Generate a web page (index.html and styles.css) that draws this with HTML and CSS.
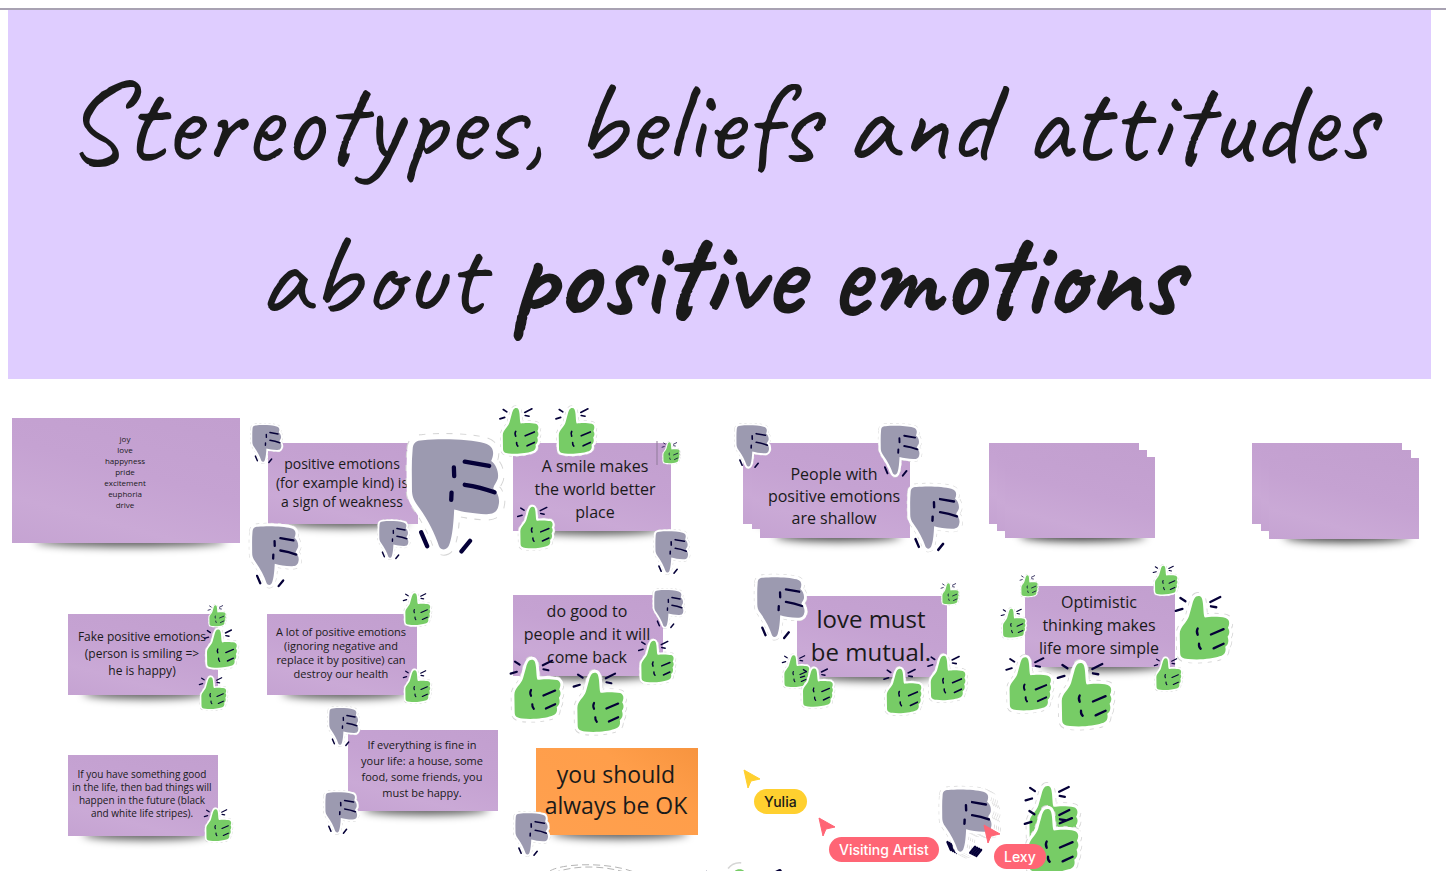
FILE: index.html
```html
<!DOCTYPE html>
<html lang="en">
<head>
<meta charset="utf-8">
<meta name="viewport" content="width=device-width, initial-scale=1">
<title>Stereotypes, beliefs and attitudes</title>
<link rel="stylesheet" href="styles.css">
</head>
<body>
<main class="board">
  <header class="frame">
    <h1 class="title">Stereotypes, beliefs and attitudes<br>about <strong>positive emotions</strong></h1>
  </header>

  <p class="note note-words">joy<br>love<br>happyness<br>pride<br>excitement<br>euphoria<br>drive</p>
  <p class="note note-weakness">positive emotions<br>(for example kind) is<br>a sign of weakness</p>
  <p class="note note-smile">A smile makes<br>the world better<br>place</p>

  <div class="note shallow-back"></div>
  <div class="note shallow-mid"></div>
  <p class="note note-shallow">People with<br>positive emotions<br>are shallow</p>

  <div class="note spare-a-back"></div>
  <div class="note spare-a-mid"></div>
  <div class="note spare-a-front"></div>
  <div class="note spare-b-back"></div>
  <div class="note spare-b-mid"></div>
  <div class="note spare-b-front"></div>

  <p class="note note-fake">Fake positive emotions<br>(person is smiling =&gt;<br>he is happy)</p>
  <p class="note note-health">A lot of positive emotions<br>(ignoring negative and<br>replace it by positive) can<br>destroy our health</p>
  <p class="note note-good">do good to<br>people and it will<br>come back</p>
  <p class="note note-mutual">love must<br>be mutual.</p>
  <p class="note note-optimistic">Optimistic<br>thinking makes<br>life more simple</p>
  <p class="note note-stripes">If you have something good<br>in the life, then bad things will<br>happen in the future (black<br>and white life stripes).</p>
  <p class="note note-fine">If everything is fine in<br>your life: a house, some<br>food, some friends, you<br>must be happy.</p>
  <p class="note note-orange">you should<br>always be OK</p>

  <svg class="stickers" aria-hidden="true">
    <defs>
      <path id="up-body" d="M76 12C66 12 62 22 58 36L48 72C42 92 20 104 20 126L21 182C21 196 28 200 45 202C80 206 120 201 140 194C158 190 160 176 157 165C168 158 168 145 164 135C172 125 170 115 165 108C172 95 170 82 158 78C140 74 110 74 96 77C92 74 92 60 90 36C88 20 86 12 76 12Z"/>
      <path id="down-body" d="M14 50C15 28 24 22 45 21C100 15 190 18 232 30C262 38 262 62 252 84C268 95 276 120 272 138C268 150 262 154 258 167C272 178 280 200 274 220C270 240 255 246 235 245C200 244 165 238 140 231C138 270 135 310 126 335C120 356 101 356 94 342C80 300 60 262 30 220C15 200 12 185 12 170C12 130 10 90 14 50Z"/>
      <symbol id="up" viewBox="0 0 180 220">
        <use href="#up-body" class="cut"/>
        <use href="#up-body" class="edge edge-up"/>
        <use href="#up-body" class="green"/>
        <path class="ink ink-up" d="M74 110Q69 118 74 129M78 156Q77 166 83 171M114 128L152 112M122 170L152 156M22 18L37 28M8 57L28 51M112 30L142 15M114 43L130 46"/>
      </symbol>
      <symbol id="down" viewBox="0 0 300 380">
        <use href="#down-body" class="cut cut-down"/>
        <use href="#down-body" class="edge edge-down"/>
        <use href="#down-body" class="grey"/>
        <path class="ink ink-down" d="M139 103L140 130M132 180L131 202M172 86L246 99M172 156Q220 163 262 179M40 300L58 342M188 326L162 358"/>
      </symbol>
    </defs>

    <use href="#up" x="498" y="405" width="43" height="53"/>
    <use href="#up" x="554" y="405" width="43" height="53"/>
    <path class="hairline" d="M657 441V465"/>
    <use href="#up" x="661" y="441" width="20" height="24"/>
    <use href="#up" x="516" y="504" width="39" height="48"/>
    <use href="#up" x="207" y="604" width="20" height="24"/>
    <use href="#up" x="203" y="627" width="36" height="44"/>
    <use href="#up" x="198" y="675" width="30" height="37"/>
    <use href="#up" x="402" y="591" width="30" height="37"/>
    <use href="#up" x="402" y="668" width="30" height="37"/>
    <use href="#up" x="203" y="807" width="30" height="37"/>
    <use href="#up" x="508" y="656" width="56" height="68"/>
    <use href="#up" x="571" y="669" width="56" height="68"/>
    <use href="#up" x="637" y="638" width="39" height="48"/>
    <use href="#up" x="940" y="582" width="20" height="24"/>
    <use href="#up" x="781" y="653" width="30" height="37"/>
    <use href="#up" x="799" y="666" width="36" height="44"/>
    <use href="#up" x="882" y="666" width="42" height="51"/>
    <use href="#up" x="926" y="653" width="42" height="51"/>
    <use href="#up" x="1019" y="574" width="20" height="24"/>
    <use href="#up" x="1152" y="564" width="27" height="33"/>
    <use href="#up" x="1000" y="607" width="27" height="33"/>
    <use href="#up" x="1173" y="592" width="60" height="73"/>
    <use href="#up" x="1153" y="656" width="30" height="37"/>
    <use href="#up" x="1004" y="654" width="50" height="61"/>
    <use href="#up" x="1055" y="659" width="60" height="73"/>
    <use href="#up" x="1023" y="782" width="58" height="71"/>
    <use href="#up" x="1022" y="805" width="60" height="73"/>
    <use href="#up" x="693" y="862" width="110" height="134"/>

    <use href="#down" x="251" y="423" width="33" height="42"/>
    <use href="#down" x="250" y="523" width="53" height="67"/>
    <use href="#down" x="378" y="519" width="33" height="42"/>
    <use href="#down" x="408" y="433" width="99" height="126"/>
    <use href="#down" x="654" y="529" width="37" height="47"/>
    <use href="#down" x="735" y="423" width="37" height="47"/>
    <use href="#down" x="879" y="423" width="44" height="56"/>
    <use href="#down" x="908" y="483" width="56" height="71"/>
    <use href="#down" x="328" y="706" width="33" height="42"/>
    <use href="#down" x="324" y="790" width="36" height="46"/>
    <use href="#down" x="653" y="588" width="33" height="42"/>
    <use href="#down" x="755" y="574" width="54" height="68"/>
    <use href="#down" x="514" y="811" width="37" height="47"/>
    <use href="#down" x="946" y="789" width="56" height="71"/>
    <use href="#down" x="944" y="788" width="56" height="71"/>
    <use href="#down" x="942" y="787" width="56" height="71"/>
    <use href="#down" x="940" y="786" width="56" height="71"/>
    <path class="arc" d="M550 871C560 864 605 861 634 872M553 873C575 865 602 865 628 873"/>
  </svg>

  <div class="cursor cursor-yulia">
    <svg class="pointer" viewBox="0 0 18 20" aria-hidden="true"><path d="M1 1L17 10L8 12L5 19Z"/></svg>
    <span class="name">Yulia</span>
  </div>
  <div class="cursor cursor-artist">
    <svg class="pointer" viewBox="0 0 18 20" aria-hidden="true"><path d="M1 1L17 10L8 12L5 19Z"/></svg>
    <span class="name">Visiting Artist</span>
  </div>
  <div class="cursor cursor-lexy">
    <svg class="pointer" viewBox="0 0 18 20" aria-hidden="true"><path d="M1 1L17 10L8 12L5 19Z"/></svg>
    <span class="name">Lexy</span>
  </div>
</main>
</body>
</html>
```

FILE: styles.css
```css
* { box-sizing: border-box; }

body {
  margin: 0;
  background: #fff;
  color: #1a1a1a;
  font-family: "Open Sans", "Noto Sans", sans-serif;
}

.board {
  position: relative;
  min-height: 100vh;
  padding-top: 8px;
  overflow: hidden;
}

/* Title frame */
.frame {
  border-top: 2px solid #a8a2b2;
  padding: 0 15px 0 8px;
}

.title {
  margin: 0;
  padding: 36px 0 27px;
  background: #dfcdff;
  font-family: Caveat, Lato, sans-serif;
  font-size: 117px;
  font-weight: 400;
  line-height: 153px;
  text-align: center;
}

.title strong { font-weight: 700; }

/* Sticky notes, placed freely on the canvas */
.note {
  position: absolute;
  isolation: isolate;
  display: flex;
  align-items: center;
  justify-content: center;
  width: 150px;
  height: 81px;
  margin: 0;
  padding: 0 2px 3px 0;
  text-align: center;
  white-space: nowrap;
  font-size: 16px;
  line-height: 23px;
}

.note::before {
  content: "";
  position: absolute;
  z-index: -2;
  left: 10%;
  right: 6%;
  bottom: -4px;
  height: 12px;
  border-radius: 50%;
  background: rgba(0, 0, 0, 0.65);
  filter: blur(4px);
}

.note::after {
  content: "";
  position: absolute;
  z-index: -1;
  inset: 0;
  background: linear-gradient(195deg, #c29fcf 0%, #c5a2d2 45%, #caa9d6 75%, #c5a3d2 100%);
}

.note-words {
  left: 12px; top: 418px; width: 228px; height: 125px;
  align-items: flex-start;
  padding-top: 15px;
  font-size: 8px;
  line-height: 11px;
}
.note-weakness { left: 268px; top: 443px; font-size: 14px; line-height: 19px; }
.note-smile { left: 513px; top: 443px; width: 158px; height: 88px; padding: 5px 0 0 6px; }

.shallow-back { left: 743px; top: 443px; }
.shallow-mid { left: 752px; top: 448px; }
.note-shallow { left: 760px; top: 443px; height: 95px; padding-top: 13px; line-height: 22px; }

.spare-a-back { left: 989px; top: 443px; }
.spare-a-mid { left: 997px; top: 450px; }
.spare-a-front { left: 1005px; top: 457px; }
.spare-b-back { left: 1252px; top: 443px; }
.spare-b-mid { left: 1261px; top: 450px; }
.spare-b-front { left: 1269px; top: 458px; }

.note-fake { left: 68px; top: 614px; font-size: 12px; line-height: 17px; }
.note-health { left: 267px; top: 614px; font-size: 11px; line-height: 14px; }
.note-good { left: 513px; top: 595px; }
.note-mutual { left: 797px; top: 596px; font-size: 24px; line-height: 33px; }
.note-optimistic { left: 1025px; top: 586px; }
.note-stripes { left: 68px; top: 755px; font-size: 10px; line-height: 13px; }
.note-fine { left: 348px; top: 730px; font-size: 11px; line-height: 16px; }
.note-orange { left: 536px; top: 748px; width: 162px; height: 87px; font-size: 23px; line-height: 31px; }
.note-orange::after { background: linear-gradient(215deg, #f7943f 0%, #ff9e4a 35%, #ffa04f 100%); }

/* Thumb stickers */
.stickers {
  position: absolute;
  inset: 0;
  width: 100%;
  height: 100%;
  pointer-events: none;
}

.stickers symbol { overflow: visible; }
.cut { fill: #fff; stroke: #d6d6d6; stroke-width: 24; stroke-dasharray: 12 16; }
.cut-down { stroke-width: 38; stroke-dasharray: 18 22; }
.edge { fill: #fff; stroke: #fff; stroke-linejoin: round; }
.edge-up { stroke-width: 19; }
.edge-down { stroke-width: 32; }
.green { fill: #77cc66; }
.grey { fill: #9c9ab0; }
.ink { fill: none; stroke: #050038; stroke-linecap: round; }
.ink-up { stroke-width: 7; }
.ink-down { stroke-width: 13; }
.hairline { stroke: #8f7a99; stroke-width: 1; }
.arc { fill: none; stroke: #b5b5b5; stroke-width: 1; stroke-dasharray: 7 4; }

/* Live cursors with name labels */
.cursor {
  position: absolute;
  display: flex;
  flex-direction: column;
  align-items: flex-start;
}

.pointer { width: 18px; height: 20px; }
.pointer path { fill: currentColor; stroke: currentColor; stroke-width: 1; stroke-linejoin: round; }

.name {
  margin-left: 11px;
  padding: 0 10px;
  border-radius: 13px;
  background: currentColor;
  font-family: Inter, sans-serif;
  font-size: 14px;
  font-weight: 500;
  line-height: 25px;
}
.name::first-line { color: #fff; }

.cursor-yulia { left: 743px; top: 769px; color: #ffd02f; }
.cursor-yulia .name::first-line { color: #1a1a1a; }
.cursor-artist { left: 818px; top: 817px; color: #ff6575; }
.cursor-lexy { left: 983px; top: 824px; color: #ff6575; }
```
